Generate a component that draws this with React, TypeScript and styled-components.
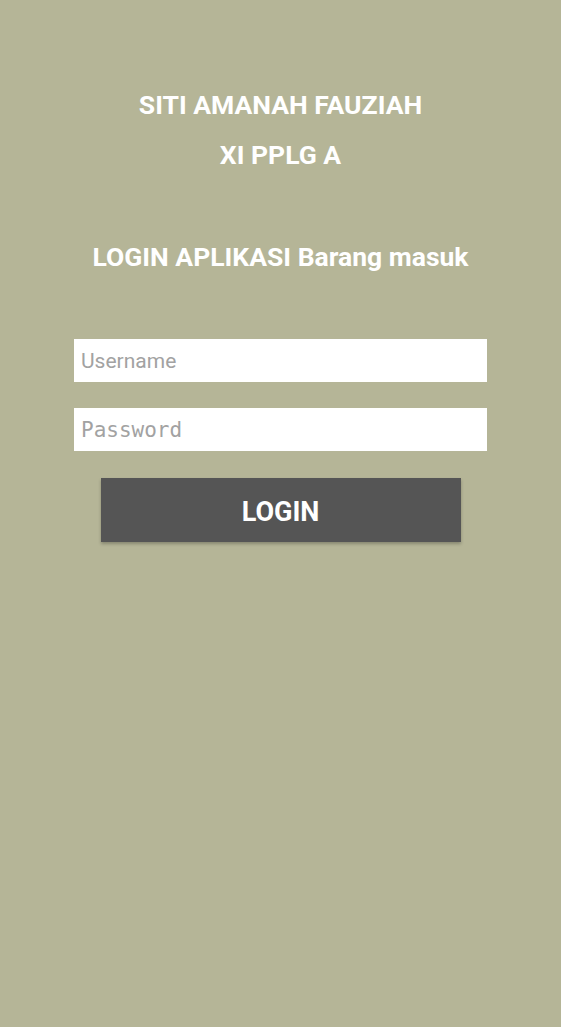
import styled, { createGlobalStyle } from "styled-components";

const GlobalStyle = createGlobalStyle`
  html, body {
    margin: 0;
    padding: 0;
    background: #b5b597;
  }
  * { box-sizing: border-box; }
`;

const Page = styled.div`
  width: 561px;
  min-height: 1027px;
  background: #b5b597;
  display: flex;
  flex-direction: column;
  align-items: center;
  padding-top: 90px;
  font-family: Roboto, "Liberation Sans", sans-serif;
`;

const Heading = styled.div<{ $gap?: number }>`
  color: #ffffff;
  font-weight: 700;
  font-size: 26.5px;
  line-height: 30px;
  margin-top: ${(p) => p.$gap ?? 0}px;
  text-align: center;
`;

const Form = styled.form`
  width: 413px;
  display: flex;
  flex-direction: column;
  align-items: center;
  margin-top: 67px;
`;

const Field = styled.input<{ $mono?: boolean }>`
  width: 100%;
  height: 43px;
  border: none;
  outline: none;
  background: #ffffff;
  padding: 0 7px;
  font-size: 21px;
  font-family: ${(p) =>
    p.$mono ? `"DejaVu Sans Mono", monospace` : `Roboto, "Liberation Sans", sans-serif`};
  color: #333;
  margin-bottom: 26px;
  &::placeholder {
    color: #a2a2a2;
  }
`;

const Button = styled.button`
  width: 360px;
  height: 64px;
  margin-top: 1px;
  padding: 3px 0 0;
  border: none;
  background: #555555;
  color: #ffffff;
  font-family: Roboto, "Liberation Sans", sans-serif;
  font-weight: 700;
  font-size: 27px;
  box-shadow: 0 2px 3px rgba(0, 0, 0, 0.25);
  cursor: pointer;
`;

export default function App() {
  return (
    <>
      <GlobalStyle />
      <Page>
        <Heading>SITI AMANAH FAUZIAH</Heading>
        <Heading $gap={20}>XI PPLG A</Heading>
        <Heading $gap={72}>LOGIN APLIKASI Barang masuk</Heading>
        <Form onSubmit={(e) => e.preventDefault()}>
          <Field placeholder="Username" />
          <Field $mono type="password" placeholder="Password" />
          <Button type="submit">LOGIN</Button>
        </Form>
      </Page>
    </>
  );
}
